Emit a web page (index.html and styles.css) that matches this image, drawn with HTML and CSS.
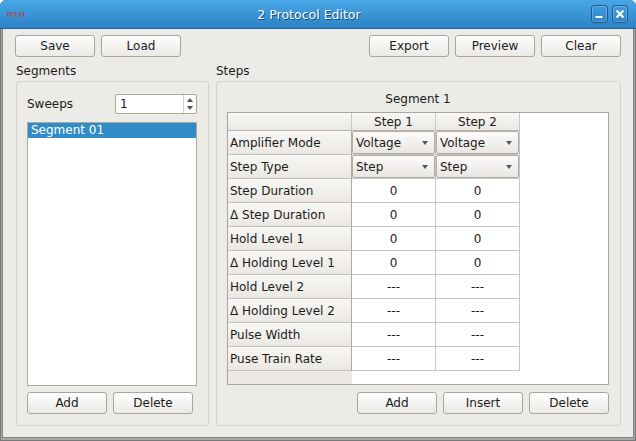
FILE: index.html
```html
<!DOCTYPE html>
<html>
<head>
<meta charset="utf-8">
<link rel="stylesheet" href="styles.css">
</head>
<body>
<div class="window">
  <div class="titlebar">
    <div class="tb-left"><span class="rtxi">RTXI</span></div>
    <div class="tb-title">2 Protocol Editor</div>
    <div class="tb-buttons">
      <span class="wbtn"><svg width="10" height="10" viewBox="0 0 10 10"><rect x="1.5" y="7" width="7" height="2" fill="#fff"/></svg></span>
      <span class="wbtn"><svg width="10" height="10" viewBox="0 0 10 10"><path d="M1.5 1.5 L8.5 8.5 M8.5 1.5 L1.5 8.5" stroke="#fff" stroke-width="2.2"/></svg></span>
    </div>
  </div>
  <div class="frame">
    <div class="toolbar">
      <button class="btn">Save</button>
      <button class="btn">Load</button>
      <span class="spacer"></span>
      <button class="btn">Export</button>
      <button class="btn">Preview</button>
      <button class="btn">Clear</button>
    </div>
    <div class="main">
      <section class="col col-seg">
        <div class="gb-title">Segments</div>
        <div class="groupbox seg-box">
          <div class="sweeps-row">
            <span>Sweeps</span>
            <div class="spinbox">
              <span class="spin-val">1</span>
              <span class="spin-btns"><i class="arr-up"></i><i class="arr-down"></i></span>
            </div>
          </div>
          <div class="list">
            <div class="item selected">Segment 01</div>
          </div>
          <div class="btn-row">
            <button class="btn">Add</button>
            <button class="btn">Delete</button>
          </div>
        </div>
      </section>
      <section class="col col-steps">
        <div class="gb-title">Steps</div>
        <div class="groupbox steps-box">
          <div class="seg-label">Segment 1</div>
          <div class="table">
            <div class="hc"></div><div class="hc">Step 1</div><div class="hc">Step 2</div><div class="fill"></div>

            <div class="vh">Amplifier Mode</div>
            <div class="c"><div class="combo">Voltage<i class="arr-down combo-arr"></i></div></div>
            <div class="c"><div class="combo">Voltage<i class="arr-down combo-arr"></i></div></div>
            <div class="fill"></div>

            <div class="vh">Step Type</div>
            <div class="c"><div class="combo">Step<i class="arr-down combo-arr"></i></div></div>
            <div class="c"><div class="combo">Step<i class="arr-down combo-arr"></i></div></div>
            <div class="fill"></div>

            <div class="vh">Step Duration</div><div class="c">0</div><div class="c">0</div><div class="fill"></div>
            <div class="vh">Δ Step Duration</div><div class="c">0</div><div class="c">0</div><div class="fill"></div>
            <div class="vh">Hold Level 1</div><div class="c">0</div><div class="c">0</div><div class="fill"></div>
            <div class="vh">Δ Holding Level 1</div><div class="c">0</div><div class="c">0</div><div class="fill"></div>
            <div class="vh">Hold Level 2</div><div class="c">---</div><div class="c">---</div><div class="fill"></div>
            <div class="vh">Δ Holding Level 2</div><div class="c">---</div><div class="c">---</div><div class="fill"></div>
            <div class="vh">Pulse Width</div><div class="c">---</div><div class="c">---</div><div class="fill"></div>
            <div class="vh">Puse Train Rate</div><div class="c">---</div><div class="c">---</div><div class="fill"></div>

            <div class="vh-empty"></div><div class="fill span3"></div>
          </div>
          <div class="btn-row right">
            <button class="btn">Add</button>
            <button class="btn">Insert</button>
            <button class="btn">Delete</button>
          </div>
        </div>
      </section>
    </div>
  </div>
</div>
</body>
</html>
```
FILE: styles.css
```css
* { box-sizing: border-box; }
body {
  margin: 0;
  background: #ffffff;
  font-family: "DejaVu Sans", sans-serif;
  font-size: 12px;
  color: #1b1b1b;
}
.window {
  width: 636px;
  height: 441px;
  display: flex;
  flex-direction: column;
  background: #a6a6a6;
  border-radius: 6px 6px 0 0;
  overflow: hidden;
  box-shadow: inset 0 0 0 1px #7a7a7a;
}
.titlebar {
  height: 29px;
  flex: none;
  border-bottom: 1px solid #1f6199;
  background: linear-gradient(#49a8e8, #2b82c4);
  border-radius: 6px 6px 0 0;
  display: flex;
  align-items: center;
}
.tb-left { width: 27px; padding-left: 7px; }
.rtxi {
  font-family: "Liberation Sans", sans-serif;
  font-size: 8px;
  color: #d42b2b;
  display: block;
}
.tb-title {
  flex: 1;
  text-align: center;
  color: #ffffff;
  font-size: 12.5px;
  text-shadow: 1px 1px 0 rgba(0, 30, 60, 0.6);
}
.tb-buttons {
  width: 45px;
  display: flex;
  justify-content: flex-end;
  gap: 4px;
  padding-right: 8px;
}
.wbtn {
  width: 17px;
  height: 18px;
  border: 1px solid #1c5a8c;
  border-radius: 3px;
  background: linear-gradient(#3f9cdf, #2d84c6);
  box-shadow: inset 0 0 0 1px rgba(255, 255, 255, 0.22);
  display: flex;
  align-items: center;
  justify-content: center;
}
.frame {
  flex: 1;
  margin: 0 2px 3px 2px;
  border: 1px solid #858585;
  border-top: 0;
  background: #edebe8;
  padding: 6px 12px 11px 12px;
  display: flex;
  flex-direction: column;
}
.toolbar { display: flex; gap: 6px; height: 22px; flex: none; }
.spacer { flex: 1; }
.btn {
  width: 80px;
  height: 22px;
  padding: 0;
  font-family: "DejaVu Sans", sans-serif;
  font-size: 12px;
  color: #1b1b1b;
  border: 1px solid #aaa59f;
  border-radius: 3px;
  background: linear-gradient(#fefefe, #ebe9e6);
}
.main {
  flex: 1;
  display: flex;
  gap: 7px;
  padding-left: 1px;
}
.col { display: flex; flex-direction: column; }
.col-seg { width: 193px; }
.col-steps { flex: 1; }
.gb-title {
  margin-top: 6px;
  height: 16px;
  line-height: 16px;
  margin-bottom: 2px;
}
.groupbox {
  flex: 1;
  border: 1px solid #d6d2cd;
  border-radius: 3px;
  display: flex;
  flex-direction: column;
}
.seg-box { padding: 12px 11px 11px 10px; }
.sweeps-row {
  display: flex;
  justify-content: space-between;
  align-items: center;
  height: 20px;
}
.spinbox {
  width: 82px;
  height: 20px;
  border: 1px solid #aca7a1;
  border-radius: 2px;
  background: #ffffff;
  display: flex;
}
.spin-val { flex: 1; padding-left: 4px; line-height: 18px; }
.spin-btns {
  width: 13px;
  border-left: 1px solid #d2cec9;
  display: flex;
  flex-direction: column;
  align-items: center;
  justify-content: center;
  gap: 4px;
}
.arr-up, .arr-down {
  display: block;
  width: 0;
  height: 0;
  border-left: 3.5px solid transparent;
  border-right: 3.5px solid transparent;
}
.arr-up { border-bottom: 4px solid #505050; }
.arr-down { border-top: 4px solid #505050; }
.list {
  flex: 1;
  margin-top: 8px;
  margin-bottom: 6px;
  background: #ffffff;
  border: 1px solid #aca7a1;
}
.item { height: 15px; line-height: 15px; padding-left: 3px; }
.item.selected { background: #308cc6; color: #ffffff; }
.btn-row { display: flex; gap: 6px; flex: none; }
.btn-row.right { justify-content: flex-end; }
.steps-box { padding: 9px 11px 11px 10px; }
.seg-label {
  text-align: center;
  height: 16px;
  line-height: 16px;
  margin-bottom: 5px;
}
.table {
  flex: 1;
  margin-bottom: 7px;
  border: 1px solid #a9a5a0;
  background: #ffffff;
  display: grid;
  grid-template-columns: 124px 84px 84px 1fr;
  grid-template-rows: 18px repeat(10, 24px) 1fr;
}
.hc {
  background: linear-gradient(#f9f8f6, #ebe8e4);
  border-right: 1px solid #cbc7c2;
  border-bottom: 1px solid #b9b5b0;
  display: flex;
  align-items: center;
  justify-content: center;
}
.vh {
  background: linear-gradient(#f8f7f5, #ebe8e4);
  border-right: 1px solid #aeaaa5;
  border-bottom: 1px solid #c4c0bb;
  display: flex;
  align-items: center;
  padding-left: 2px;
  white-space: nowrap;
}
.vh-empty { background: #ece9e5; }
.c {
  border-right: 1px solid #c6c6c6;
  border-bottom: 1px solid #c6c6c6;
  display: flex;
  align-items: center;
  justify-content: center;
}
.span3 { grid-column: span 3; }
.combo {
  flex: 1;
  align-self: stretch;
  border: 1px solid #b0aba5;
  border-radius: 2px;
  background: linear-gradient(#fcfbfa, #e9e6e2);
  display: flex;
  align-items: center;
  padding-left: 3px;
}
.combo-arr { margin-left: auto; margin-right: 6px; border-top-color: #555555; }
```
